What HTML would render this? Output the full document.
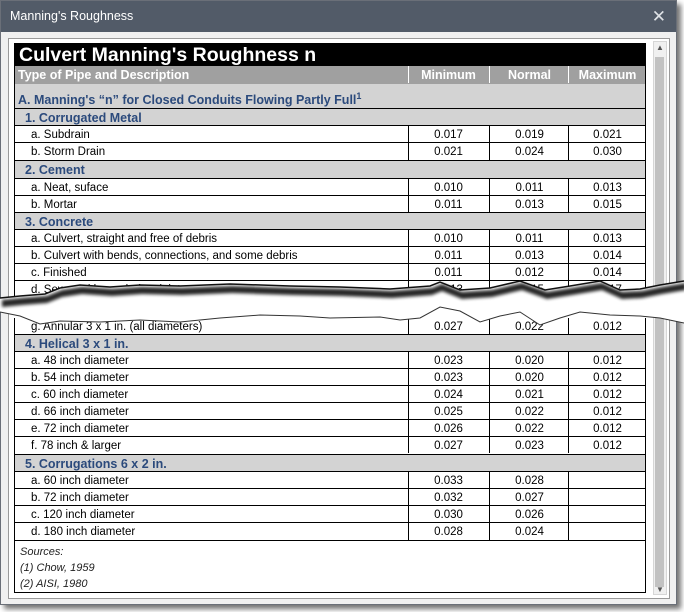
<!DOCTYPE html>
<html><head><meta charset="utf-8"><style>
*{margin:0;padding:0;box-sizing:border-box}
body{width:684px;height:612px;background:#fff;position:relative;overflow:hidden;font-family:"Liberation Sans",Arial,sans-serif}
.win{position:absolute;left:0;top:0;width:677px;height:605px;background:#f0f0f0;border:1px solid #6a6f78;box-shadow:4px 4px 5px rgba(0,0,0,.55)}
.tb{position:absolute;left:0;top:0;width:675px;height:31px;background:#525b68;color:#fff;font-size:12.5px;line-height:31px;padding-left:9px}
.x{position:absolute;right:10px;top:0;font-size:17px;color:#dfe2e6}
.pane{position:absolute;left:7px;top:37px;width:662px;height:561px;background:#fff;border:1px solid #9a9a9a}
.r{position:absolute;left:14px;width:632px;height:17px;border-bottom:1px solid #000;border-left:1px solid #000;border-right:1px solid #000;font-size:11.5px;color:#000}
.r span{position:absolute;top:0;line-height:19px}
.d{left:16px}
.c{width:80px;text-align:center;border-left:1px solid #000;height:16px}
.c1{left:393px}.c2{left:474px}.c3{left:553px;width:78px}
.s{background:#d3d3d3;color:#2b4a7c;font-weight:bold;font-size:12.5px}
.s span{left:10px;line-height:18px}
.hd{background:#a0a0a0;color:#fff;font-weight:bold;font-size:12.5px}
.hd .c{border-left:1px solid #fff;height:17px}
.sb{position:absolute;left:653px;top:41px;width:14px;height:554px;background:#f0f0f0;border:1px solid #d6d6d6}
.th{position:absolute;left:655px;top:57px;width:9px;height:530px;background:#c2c2c2}
</style></head><body>
<div class="win">
<div class="tb">Manning's Roughness<span class="x">✕</span></div>
<div class="pane"></div>
</div>
<div class="sb"></div><div class="th"></div>
<div style="position:absolute;left:656px;top:43px;font-size:8px;color:#555">▲</div>
<div style="position:absolute;left:656px;top:585px;font-size:8px;color:#555">▼</div>

<div class="r" style="top:43px;height:23px;background:#000;color:#fff;font-weight:bold;font-size:19.5px;border-bottom:0"><span style="left:4px;line-height:24px">Culvert Manning's Roughness n</span></div>
<div class="r hd" style="top:66px;height:18px;border-bottom:0"><span style="left:3px;line-height:18px">Type of Pipe and Description</span><span class="c c1" style="line-height:18px">Minimum</span><span class="c c2" style="line-height:18px">Normal</span><span class="c c3" style="line-height:18px">Maximum</span></div>
<div class="r s" style="top:84px;height:25px"><span style="left:3px;top:8px;line-height:16px">A. Manning's “n” for Closed Conduits Flowing Partly Full<sup style="font-size:9px;line-height:0">1</sup></span></div>
<div class="r s" style="top:109px"><span>1. Corrugated Metal</span></div>
<div class="r" style="top:126px"><span class="d">a. Subdrain</span><span class="c c1">0.017</span><span class="c c2">0.019</span><span class="c c3">0.021</span></div>
<div class="r" style="top:143px;height:18px"><span class="d">b. Storm Drain</span><span class="c c1" style="height:17px">0.021</span><span class="c c2" style="height:17px">0.024</span><span class="c c3" style="height:17px">0.030</span></div>
<div class="r s" style="top:161px;height:18px"><span>2. Cement</span></div>
<div class="r" style="top:179px"><span class="d">a. Neat, suface</span><span class="c c1">0.010</span><span class="c c2">0.011</span><span class="c c3">0.013</span></div>
<div class="r" style="top:196px"><span class="d">b. Mortar</span><span class="c c1">0.011</span><span class="c c2">0.013</span><span class="c c3">0.015</span></div>
<div class="r s" style="top:213px"><span>3. Concrete</span></div>
<div class="r" style="top:230px"><span class="d">a. Culvert, straight and free of debris</span><span class="c c1">0.010</span><span class="c c2">0.011</span><span class="c c3">0.013</span></div>
<div class="r" style="top:247px"><span class="d">b. Culvert with bends, connections, and some debris</span><span class="c c1">0.011</span><span class="c c2">0.013</span><span class="c c3">0.014</span></div>
<div class="r" style="top:264px"><span class="d">c. Finished</span><span class="c c1">0.011</span><span class="c c2">0.012</span><span class="c c3">0.014</span></div>
<div class="r" style="top:281px"><span class="d">d. Sewer with manholes, inlet, etc., straight</span><span class="c c1">0.013</span><span class="c c2">0.015</span><span class="c c3">0.017</span></div>
<div class="r" style="top:318px"><span class="d">g. Annular 3 x 1 in. (all diameters)</span><span class="c c1">0.027</span><span class="c c2">0.022</span><span class="c c3">0.012</span></div>
<div class="r s" style="top:335px"><span>4. Helical 3 x 1 in.</span></div>
<div class="r" style="top:352px"><span class="d">a. 48 inch diameter</span><span class="c c1">0.023</span><span class="c c2">0.020</span><span class="c c3">0.012</span></div>
<div class="r" style="top:369px"><span class="d">b. 54 inch diameter</span><span class="c c1">0.023</span><span class="c c2">0.020</span><span class="c c3">0.012</span></div>
<div class="r" style="top:386px"><span class="d">c. 60 inch diameter</span><span class="c c1">0.024</span><span class="c c2">0.021</span><span class="c c3">0.012</span></div>
<div class="r" style="top:403px"><span class="d">d. 66 inch diameter</span><span class="c c1">0.025</span><span class="c c2">0.022</span><span class="c c3">0.012</span></div>
<div class="r" style="top:420px"><span class="d">e. 72 inch diameter</span><span class="c c1">0.026</span><span class="c c2">0.022</span><span class="c c3">0.012</span></div>
<div class="r" style="top:437px;height:18px"><span class="d">f. 78 inch &amp; larger</span><span class="c c1">0.027</span><span class="c c2">0.023</span><span class="c c3">0.012</span></div>
<div class="r s" style="top:455px"><span>5. Corrugations 6 x 2 in.</span></div>
<div class="r" style="top:472px"><span class="d">a. 60 inch diameter</span><span class="c c1">0.033</span><span class="c c2">0.028</span><span class="c c3"></span></div>
<div class="r" style="top:489px"><span class="d">b. 72 inch diameter</span><span class="c c1">0.032</span><span class="c c2">0.027</span><span class="c c3"></span></div>
<div class="r" style="top:506px"><span class="d">c. 120 inch diameter</span><span class="c c1">0.030</span><span class="c c2">0.026</span><span class="c c3"></span></div>
<div class="r" style="top:523px;height:18px"><span class="d">d. 180 inch diameter</span><span class="c c1" style="height:17px">0.028</span><span class="c c2" style="height:17px">0.024</span><span class="c c3" style="height:17px"></span></div>
<div class="r" style="top:541px;height:52px;font-style:italic;font-size:11px;color:#222"><span style="left:5px;top:3px;line-height:16px">Sources:<br>(1) Chow, 1959<br>(2) AISI, 1980</span></div>

<svg style="position:absolute;left:0;top:0" width="684" height="612">
<defs><filter id="b" x="-5%" y="-50%" width="110%" height="200%"><feGaussianBlur stdDeviation="1.6"/></filter></defs>
<path d="M0,298 L20,296 L45,294 L60,288 L80,285 L110,287 L140,285 L180,286 L230,284 L290,286 L340,287 L390,289 L430,286 L440,282 L460,290 L490,288 L520,281 L545,290 L570,286 L600,281 L620,290 L640,289 L660,285 L684,281 L684,323 L660,318 L640,316 L610,315 L580,312 L560,318 L540,325 L520,312 L500,316 L480,322 L460,311 L440,307 L420,318 L400,320 L380,317 L330,318 L300,316 L260,315 L220,318 L180,322 L140,320 L100,322 L60,321 L40,324 L20,316 L0,312 Z" fill="#fff"/>
<path d="M0,298 L20,296 L45,294 L60,288 L80,285 L110,287 L140,285 L180,286 L230,284 L290,286 L340,287 L390,289 L430,286 L440,282 L460,290 L490,288 L520,281 L545,290 L570,286 L600,281 L620,290 L640,289 L660,285 L684,281 L684,288 L660,292 L640,296 L620,297 L600,288 L570,293 L545,297 L520,288 L490,295 L460,297 L440,289 L430,293 L390,296 L340,294 L290,293 L230,291 L180,293 L140,292 L110,294 L80,292 L60,295 L45,301 L20,303 L0,305 Z" fill="#000" opacity=".85" filter="url(#b)" transform="translate(2,2)"/>
<path d="M0,298 L20,296 L45,294 L60,288 L80,285 L110,287 L140,285 L180,286 L230,284 L290,286 L340,287 L390,289 L430,286 L440,282 L460,290 L490,288 L520,281 L545,290 L570,286 L600,281 L620,290 L640,289 L660,285 L684,281" fill="none" stroke="#111" stroke-width="1.5"/>
<path d="M0,312 L20,316 L40,324 L60,321 L100,322 L140,320 L180,322 L220,318 L260,315 L300,316 L330,318 L380,317 L400,320 L420,318 L440,307 L460,311 L480,322 L500,316 L520,312 L540,325 L560,318 L580,312 L610,315 L640,316 L660,318 L684,323" fill="none" stroke="#333" stroke-width="1"/>
</svg>
</body></html>
